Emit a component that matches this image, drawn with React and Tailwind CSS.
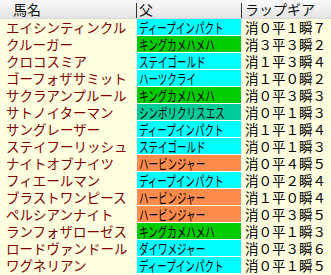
import React from 'react';

const CYAN = 'bg-[#00ffff]';
const GREEN = 'bg-[#00cc00]';
const ORANGE = 'bg-[#ff8c4c]';
const TEAL = 'bg-[#00cc99]';

const rows = [
    { name: 'エイシンティンクル', sire: 'ディープインパクト', color: CYAN, gear: '消０平１瞬７' },
    { name: 'クルーガー', sire: 'キングカメハメハ', color: GREEN, gear: '消３平３瞬２' },
    { name: 'クロコスミア', sire: 'ステイゴールド', color: CYAN, gear: '消１平３瞬４' },
    { name: 'ゴーフォザサミット', sire: 'ハーツクライ', color: CYAN, gear: '消１平０瞬２' },
    { name: 'サクラアンプルール', sire: 'キングカメハメハ', color: GREEN, gear: '消０平３瞬３' },
    { name: 'サトノイターマン', sire: 'シンボリクリスエス', color: TEAL, gear: '消０平１瞬３' },
    { name: 'サングレーザー', sire: 'ディープインパクト', color: CYAN, gear: '消１平１瞬４' },
    { name: 'ステイフーリッシュ', sire: 'ステイゴールド', color: CYAN, gear: '消０平１瞬３' },
    { name: 'ナイトオブナイツ', sire: 'ハービンジャー', color: ORANGE, gear: '消０平４瞬５' },
    { name: 'フィエールマン', sire: 'ディープインパクト', color: CYAN, gear: '消０平２瞬４' },
    { name: 'ブラストワンピース', sire: 'ハービンジャー', color: ORANGE, gear: '消１平０瞬４' },
    { name: 'ペルシアンナイト', sire: 'ハービンジャー', color: ORANGE, gear: '消０平３瞬５' },
    { name: 'ランフォザローゼス', sire: 'キングカメハメハ', color: GREEN, gear: '消０平１瞬３' },
    { name: 'ロードヴァンドール', sire: 'ダイワメジャー', color: CYAN, gear: '消０平３瞬６' },
    { name: 'ワグネリアン', sire: 'ディープインパクト', color: CYAN, gear: '消０平１瞬５' },
];

export default function App() {
    return (
        <div className="w-[331px] h-[275px] bg-[#ffffe0] text-[13.5px] font-['Noto_Sans_CJK_JP',sans-serif] overflow-hidden">
            {/* header */}
            <div className="flex h-[19px] bg-gradient-to-b from-[#fafafa] to-[#e4e4e4] border-b border-[#d8d8d8] text-[#111] text-[14px] leading-[18px]">
                <div className="w-[136px] pl-[13px]">馬名</div>
                <div className="w-px h-[15px] mt-[3px] bg-[#333]"></div>
                <div className="w-[104px] pl-[2px]">父</div>
                <div className="w-px h-[15px] mt-[3px] bg-[#333]"></div>
                <div className="flex-1 pl-[3px]">ラップギア</div>
            </div>

            {rows.map((r, i) => (
                <div key={i} className="flex h-[17px] leading-[17px]">
                    <div className="w-[136px] pl-[6px] text-[#800000] whitespace-nowrap">{r.name}</div>
                    <div className="w-[106px] border-x border-b border-white">
                        <div className={`h-full pl-[2px] text-black text-[14px] leading-[16px] whitespace-nowrap ${r.color}`}>
                            <span className="inline-block origin-left scale-x-[0.68]">{r.sire}</span>
                        </div>
                    </div>
                    <div className="flex-1 pl-[3px] text-black whitespace-nowrap">{r.gear}</div>
                </div>
            ))}
        </div>
    );
}
